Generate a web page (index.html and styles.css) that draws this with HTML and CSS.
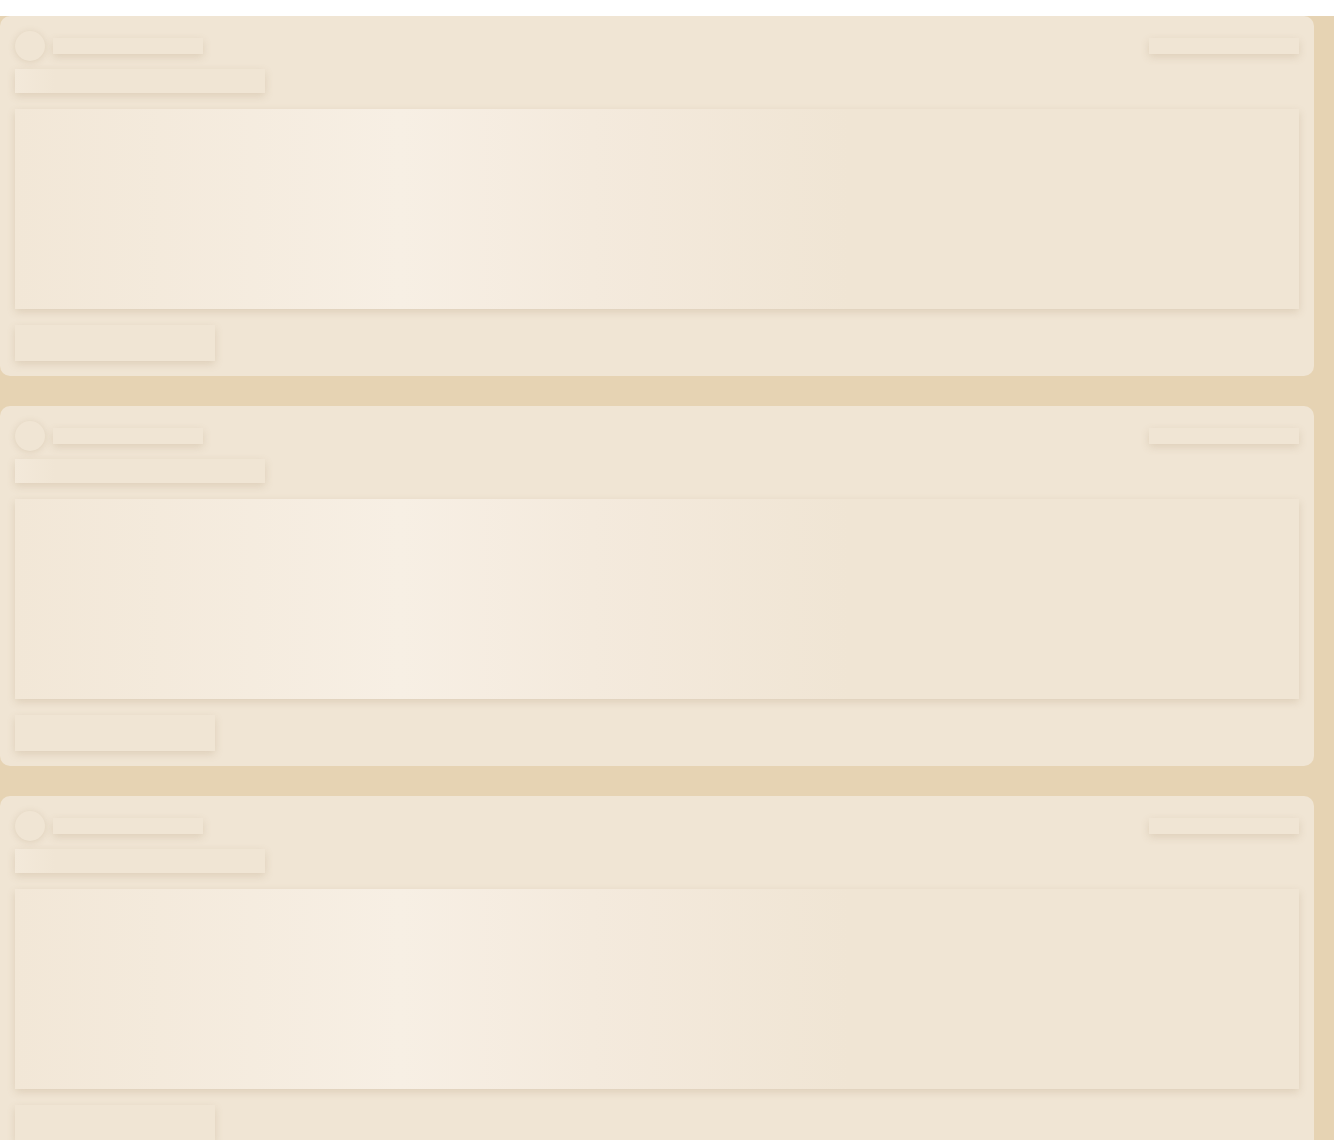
FILE: index.html
```html
<!DOCTYPE html>
<html>
<head>
<meta charset="utf-8">
<link rel="stylesheet" href="styles.css">
</head>
<body>
<div class="page">
  <div class="card">
    <div class="head">
      <div class="avatar sk"></div>
      <div class="line sk"></div>
      <div class="spacer"></div>
      <div class="line sk"></div>
    </div>
    <div class="title sk"></div>
    <div class="block sk"></div>
    <div class="btn sk"></div>
  </div>
  <div class="card">
    <div class="head">
      <div class="avatar sk"></div>
      <div class="line sk"></div>
      <div class="spacer"></div>
      <div class="line sk"></div>
    </div>
    <div class="title sk"></div>
    <div class="block sk"></div>
    <div class="btn sk"></div>
  </div>
  <div class="card">
    <div class="head">
      <div class="avatar sk"></div>
      <div class="line sk"></div>
      <div class="spacer"></div>
      <div class="line sk"></div>
    </div>
    <div class="title sk"></div>
    <div class="block sk"></div>
    <div class="btn sk"></div>
  </div>
</div>
</body>
</html>
```
FILE: styles.css
```css
html, body {
  margin: 0;
  padding: 0;
  background: #ffffff;
}
.page {
  margin-top: 16px;
  background: #e6d3b3;
  padding: 0 20px 0 0;
  display: flex;
  flex-direction: column;
  gap: 30px;
  min-height: 1124px;
}
.card {
  background: #f0e5d4;
  border-radius: 10px;
  padding: 15px;
  display: flex;
  flex-direction: column;
}
.sk {
  background: #f0e5d4;
  box-shadow: 0 3px 8px rgba(150, 120, 80, 0.2);
}
.head {
  display: flex;
  align-items: center;
  height: 30px;
}
.avatar {
  width: 30px;
  height: 30px;
  border-radius: 50%;
  box-shadow: 0 1px 7px rgba(150, 120, 80, 0.2);
}
.line {
  width: 150px;
  height: 16px;
  margin-left: 8px;
}
.spacer { flex: 1; }
.title {
  margin-top: 8px;
  width: 250px;
  height: 24px;
  background: linear-gradient(90deg, #f3e9da 0px, #f0e5d4 40px, #f0e5d4 100%);
}
.block {
  margin-top: 16px;
  height: 200px;
  background: linear-gradient(90deg, #f2e7d7 0%, #f7efe4 30%, #f4eadd 45%, #f0e5d4 65%, #f0e5d4 100%);
}
.btn {
  margin-top: 16px;
  width: 200px;
  height: 36px;
}
```
